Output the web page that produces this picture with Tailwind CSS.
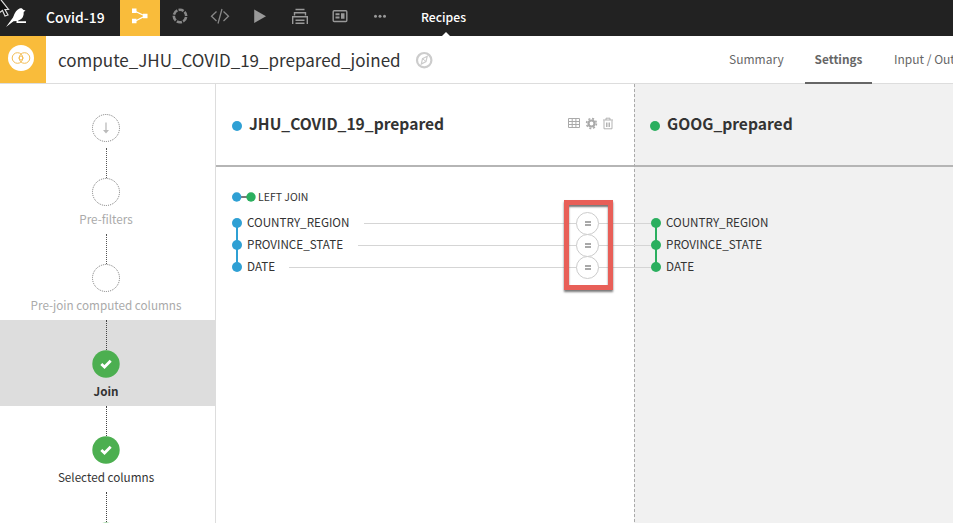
<!DOCTYPE html>
<html lang="en">
<head>
<meta charset="utf-8">
<title>compute_JHU_COVID_19_prepared_joined</title>
<script src="https://cdn.jsdelivr.net/npm/@tailwindcss/browser@4"></script>
</head>
<body class="w-[953px] h-[523px] overflow-hidden bg-white text-[#333] font-['Noto_Sans_CJK_SC','Noto_Sans',sans-serif] relative flex flex-col">
  <!-- Top navigation -->
  <header class="h-9 shrink-0 bg-[#222] flex items-center text-white">
    <div class="w-[46px] h-9 shrink-0">
      <svg width="46" height="36" viewBox="0 0 46 36"><path d="M6 27L13 17.500C14.800 12.500 17 9.300 20 8.300C21.500 7.900 22.800 8.600 23.200 9.800L25.500 10.500L23.700 12C24 16 22.500 19 19 20.300L18 20.700V21.300H26V23H16.500V20.900L13.500 21.300Z" fill="#fff"/></svg>
    </div>
    <div class="w-[74px] shrink-0 text-[13.900px] leading-9 font-medium whitespace-nowrap"><span class="relative -top-px">Covid-19</span></div>
    <div class="w-10 h-9 bg-[#f9bc3b] shrink-0"><svg width="40" height="36" viewBox="0 0 40 36"><path d="M14.500 11L25 16L14.500 21.500" fill="none" stroke="#fff" stroke-width="1.300"/><path d="M12 8.500h4.500v4.500h-4.500zM12 18.700h4.500v4.500h-4.500zM23 13.700h4.500v4.500h-4.500z" fill="#fff"/></svg></div>
    <div class="w-10 shrink-0"><svg width="40" height="36" viewBox="0 0 40 36"><circle cx="20" cy="16" r="6.200" fill="none" stroke="#888" stroke-width="2.600" stroke-dasharray="5.290 1.200" stroke-dashoffset="-1"/></svg></div>
    <div class="w-10 shrink-0"><svg width="40" height="36" viewBox="0 0 40 36" fill="none" stroke="#888" stroke-width="1.300"><path d="M16.500 11.500L11.500 16.200L16.500 21M23.500 11.500L28.500 16.200L23.500 21M22 9L18 23.500"/></svg></div>
    <div class="w-10 shrink-0"><svg width="40" height="36" viewBox="0 0 40 36"><path d="M14.200 9.500L26 16.200L14.200 23z" fill="#999"/></svg></div>
    <div class="w-10 shrink-0"><svg width="40" height="36" viewBox="0 0 40 36" fill="none" stroke="#999" stroke-width="1.400"><path d="M15.500 9.500h9M14.500 15.500v-2.800h11v2.800M12.700 24v-7.300h14.600v7.300M15.500 20.300h9M15.500 23.300h9"/></svg></div>
    <div class="w-10 shrink-0"><svg width="40" height="36" viewBox="0 0 40 36"><rect x="13.200" y="10.700" width="13.600" height="10.800" rx="1" fill="none" stroke="#999" stroke-width="1.400"/><path d="M15.500 13.300h4v2h-4zM15.500 16.500h4v2h-4zM21 13.300h3.500v5.400h-3.500z" fill="#999"/></svg></div>
    <div class="w-10 shrink-0"><svg width="40" height="36" viewBox="0 0 40 36" fill="#999"><circle cx="15.500" cy="16.200" r="1.500"/><circle cx="20" cy="16.200" r="1.500"/><circle cx="24.500" cy="16.200" r="1.500"/></svg></div>
    <div class="relative ml-[21px] h-9 text-[12.200px] leading-9 font-medium"><span class="relative -top-px">Recipes</span>
      <svg class="absolute bottom-0 left-[21px]" width="8" height="4"><path d="M0 4L4 0L8 4z" fill="#fff"/></svg>
    </div>
  </header>

  <!-- Recipe title bar -->
  <div class="h-12 shrink-0 flex border-b border-[#ddd] bg-white whitespace-nowrap">
    <div class="w-[46px] h-[47px] bg-[#f9bc3b] shrink-0"><svg width="46" height="47" viewBox="0 0 46 47"><circle cx="21" cy="22" r="13" fill="#fff"/><g fill="none" stroke="#f3bd55" stroke-width="1"><circle cx="17.500" cy="22" r="5.300"/><circle cx="24.500" cy="22" r="5.300"/><circle cx="21" cy="22" r="2"/></g></svg></div>
    <h1 class="ml-3 w-[357px] shrink-0 text-[17px] leading-[48px]">compute_JHU_COVID_19_prepared_joined</h1>
    <svg class="shrink-0 mt-[15px]" width="18" height="18" viewBox="0 0 18 18" fill="none" stroke="#ccc"><circle cx="9.200" cy="9.200" r="7.200" stroke-width="2.200"/><path d="M12.200 5.300L11 10.500L6.300 13L7.500 7.700z" stroke-width="1.200"/><path d="M7.500 7.700L11 10.500" /></svg>
    <nav class="ml-[296px] flex shrink-0 text-[12px] leading-[46px] text-[#666]">
      <span class="w-[76px]">Summary</span>
      <span class="w-[67px] h-12 text-center text-[11.800px] font-bold border-b-2 border-[#666]">Settings</span>
      <span class="ml-[22px]">Input / Output</span>
    </nav>
  </div>

  <div class="flex flex-1 min-h-0">
    <!-- Steps -->
    <aside class="w-[216px] shrink-0 border-r border-[#ddd] flex flex-col items-stretch text-[11.700px] leading-5 text-center overflow-hidden">
      <div class="h-16 shrink-0 pl-[92px] pt-[30px]"><svg width="28" height="28" viewBox="0 0 28 28" fill="none"><circle cx="14" cy="14" r="13.500" stroke="#777" stroke-dasharray="1 1"/><path d="M14 8.500V18" stroke="#bbb" stroke-width="1.300"/><path d="M11 16h6l-3 3.500z" fill="#bbb"/></svg></div>
      <div class="h-[86px] shrink-0 flex flex-col items-center pr-[3px] text-[#aaa]">
        <i class="h-[30px] shrink-0 border-l border-dotted border-[#555]"></i>
        <svg class="shrink-0" width="28" height="28"><circle cx="14" cy="14" r="13.500" fill="none" stroke="#777" stroke-dasharray="1 1"/></svg>
        <span class="mt-[3px]">Pre-filters</span>
      </div>
      <div class="h-[86px] shrink-0 flex flex-col items-center pr-[3px] text-[#aaa]">
        <i class="h-[30px] shrink-0 border-l border-dotted border-[#555]"></i>
        <svg class="shrink-0" width="28" height="28"><circle cx="14" cy="14" r="13.500" fill="none" stroke="#777" stroke-dasharray="1 1"/></svg>
        <span class="mt-[3px]">Pre-join computed columns</span>
      </div>
      <div class="h-[86px] shrink-0 flex flex-col items-center pr-[3px] bg-[#ddd] font-bold">
        <i class="h-[30px] shrink-0 border-l border-dotted border-[#444]"></i>
        <svg class="shrink-0" width="28" height="28"><circle cx="14" cy="14" r="13.700" fill="#4caf50"/><path d="M9.300 14L12.500 17L18.700 10.800" fill="none" stroke="#fff" stroke-width="2.800"/></svg>
        <span class="mt-[3px]">Join</span>
      </div>
      <div class="h-[86px] shrink-0 flex flex-col items-center pr-[3px]">
        <i class="h-[30px] shrink-0 border-l border-dotted border-[#444]"></i>
        <svg class="shrink-0" width="28" height="28"><circle cx="14" cy="14" r="13.700" fill="#4caf50"/><path d="M9.300 14L12.500 17L18.700 10.800" fill="none" stroke="#fff" stroke-width="2.800"/></svg>
        <span class="mt-[3px]">Selected columns</span>
      </div>
      <div class="h-[86px] shrink-0 flex flex-col items-center pr-[3px]">
        <i class="h-[30px] shrink-0 border-l border-dotted border-[#444]"></i>
        <svg class="shrink-0" width="28" height="28"><circle cx="14" cy="14" r="13.500" fill="#4caf50"/></svg>
      </div>
    </aside>

    <!-- Join panel -->
    <main class="flex-1 flex flex-col relative bg-[linear-gradient(to_right,#fff_418px,#f1f1f1_418px)]">
      <div class="absolute left-[418px] inset-y-0 w-px bg-[repeating-linear-gradient(to_bottom,#aaa_0_3px,transparent_3px_5px)]"></div>
      <div class="h-[83px] shrink-0 border-b-2 border-[#b5b5b5] flex text-[15.600px] leading-[79px] font-bold">
        <div class="w-[418px] shrink-0 flex pl-4">
          <i class="size-[10px] rounded-full bg-[#2fa0d4] mt-[37px] mr-[7px]"></i>
          <span class="w-[319px]">JHU_COVID_19_prepared</span>
          <svg class="mt-[33px]" width="46" height="14" viewBox="0 0 46 14" fill="none" stroke="#aaa"><path d="M.5 1.500h11v9H.5zM.5 4.500h11M.5 7.500h11M4.200 1.500v9M7.900 1.500v9"/><circle cx="23.500" cy="6.500" r="3" stroke-width="2.200"/><circle cx="23.500" cy="6.500" r="4.900" stroke-width="1.600" stroke-dasharray="2 1.850"/><path d="M35 3h10M38 3V1.200h4V3M36 3.500v8.300h8V3.500M38.500 5.500v4.500M40 5.500v4.500M41.500 5.500v4.500" stroke-width=".9"/></svg>
        </div>
        <div class="flex pl-4">
          <i class="size-[10px] rounded-full bg-[#2baf5f] mt-[37px] mr-[7px]"></i>
          <span>GOOG_prepared</span>
        </div>
      </div>

      <div class="pt-[21px] pl-4 flex items-center text-[10.500px] leading-[18px]">
        <svg width="26" height="10"><path d="M5 5h14" stroke="#222" stroke-width="1.200"/><circle cx="4.700" cy="5" r="4.700" fill="#2fa0d4"/><circle cx="19" cy="5" r="4.700" fill="#2baf5f"/></svg>
        <span>LEFT JOIN</span>
      </div>

      <div class="relative mt-[6px] pl-4 text-[11.660px]">
        <i class="absolute left-5 top-[11px] h-11 w-0.5 bg-[#2fa0d4]"></i>
        <i class="absolute left-[439px] top-[11px] h-11 w-0.5 bg-[#2baf5f]"></i>
        <div class="h-[22px] flex items-center relative">
          <i class="size-[10px] rounded-full bg-[#2fa0d4] mr-[5px]"></i><span class="w-[117px] leading-[20px] pb-0.5">COUNTRY_REGION</span>
          <i class="h-px flex-none w-[213px] bg-[#d5d5d5]"></i>
          <b class="size-[23px] flex-none -mx-px rounded-full border border-[#ccc] bg-white flex items-center justify-center"><svg width="6" height="5"><path d="M0 1h6M0 4h6" stroke="#555" stroke-width="1.200"/></svg></b>
          <i class="h-px flex-none w-[55px] bg-[#d5d5d5]"></i><i class="size-[10px] rounded-full bg-[#2baf5f] -ml-0.5 mr-[5px]"></i><span class="leading-[20px] pb-0.5">COUNTRY_REGION</span>
        </div>
        <div class="h-[22px] flex items-center relative">
          <i class="size-[10px] rounded-full bg-[#2fa0d4] mr-[5px]"></i><span class="w-[111px] leading-[20px] pb-0.5">PROVINCE_STATE</span>
          <i class="h-px flex-none w-[219px] bg-[#d5d5d5]"></i>
          <b class="size-[23px] flex-none -mx-px rounded-full border border-[#ccc] bg-white flex items-center justify-center"><svg width="6" height="5"><path d="M0 1h6M0 4h6" stroke="#555" stroke-width="1.200"/></svg></b>
          <i class="h-px flex-none w-[55px] bg-[#d5d5d5]"></i><i class="size-[10px] rounded-full bg-[#2baf5f] -ml-0.5 mr-[5px]"></i><span class="leading-[20px] pb-0.5">PROVINCE_STATE</span>
        </div>
        <div class="h-[22px] flex items-center relative">
          <i class="size-[10px] rounded-full bg-[#2fa0d4] mr-[5px]"></i><span class="w-[42px] leading-[20px] pb-0.5">DATE</span>
          <i class="h-px flex-none w-[288px] bg-[#d5d5d5]"></i>
          <b class="size-[23px] flex-none -mx-px rounded-full border border-[#ccc] bg-white flex items-center justify-center"><svg width="6" height="5"><path d="M0 1h6M0 4h6" stroke="#555" stroke-width="1.200"/></svg></b>
          <i class="h-px flex-none w-[55px] bg-[#d5d5d5]"></i><i class="size-[10px] rounded-full bg-[#2baf5f] -ml-0.5 mr-[5px]"></i><span class="leading-[20px] pb-0.5">DATE</span>
        </div>
      </div>
      <!-- Highlight frame -->
      <div class="absolute left-[348px] top-[116px] w-[49px] h-[90px] border-5 border-[#e85f58] shadow-[0_2px_2px_#777,inset_0_2px_2px_#777]"></div>
    </main>
  </div>
  <!-- Mouse pointer -->
  <svg class="absolute left-0 top-0" width="12" height="18"><path d="M-2 -4L8.500 9.500H5L8 15L5 16L2.500 10.500L-1 13z" fill="#111" stroke="#ddd" stroke-width="1.200"/></svg>
</body>
</html>
